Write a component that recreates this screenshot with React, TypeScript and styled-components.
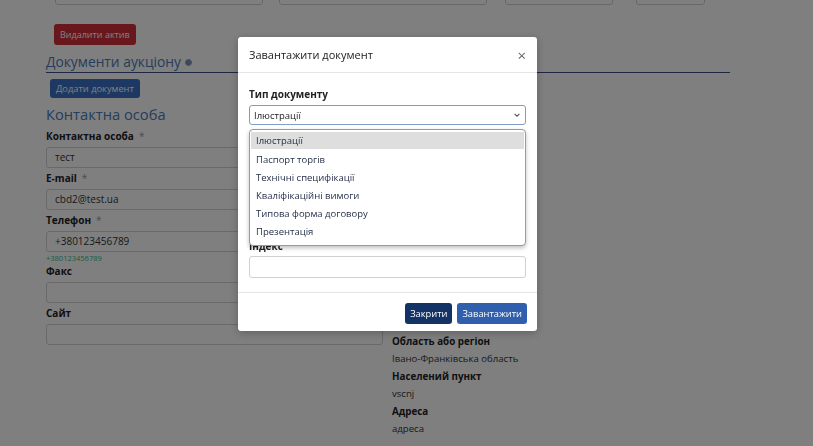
import { createGlobalStyle, styled } from 'styled-components'

const GlobalStyle = createGlobalStyle`
  html, body {
    margin: 0;
    padding: 0;
    background: #fff;
    font-family: 'Open Sans', 'Noto Sans', sans-serif;
    color: #212529;
    overflow: hidden;
  }
  * { box-sizing: border-box; }
`

const Page = styled.div`
  width: 813px;
  height: 446px;
  padding-left: 46px;
  overflow: hidden;
`

const TopRow = styled.div`
  display: flex;
  margin-top: -17px;
  padding-left: 9px;
`

const TopInput = styled.div<{ $w: number; $gap: number }>`
  width: ${({ $w }) => $w}px;
  margin-right: ${({ $gap }) => $gap}px;
  height: 22px;
  border: 1px solid #cfcfcf;
  border-radius: 3px;
`

const Button = styled.button<{ $tone: 'danger' | 'primary' | 'dark' | 'blue' }>`
  border: none;
  border-radius: 3px;
  color: #fff;
  font-family: inherit;
  font-size: 9.5px;
  line-height: 1;
  padding: 0 6px;
  white-space: nowrap;
  cursor: pointer;
  background: ${({ $tone }) =>
    $tone === 'danger' ? '#d0303a' : $tone === 'primary' ? '#3a70c4' : $tone === 'dark' ? '#133366' : '#2f5fad'};
`

const DeleteButton = styled(Button)`
  height: 21px;
  margin: 19px 0 0 8px;
  display: block;
  font-size: 9px;
`

const SectionTitle = styled.h3`
  margin: 7px 0 0;
  display: flex;
  align-items: center;
  gap: 4px;
  font-size: 13.8px;
  font-weight: 400;
  line-height: 20px;
  color: #4c7ab8;
  width: 684px;
  border-bottom: 1.5px solid #3a4f86;
`

const InfoDot = styled.span`
  width: 7px;
  height: 7px;
  border-radius: 50%;
  background: #7d8fae;
  border: 1.5px solid #8aa0c4;
  display: inline-block;
  margin-top: 1px;
`

const AddButton = styled(Button)`
  height: 19px;
  margin: 6px 0 0 4px;
  display: block;
  font-size: 9.3px;
`

const Columns = styled.div`
  display: flex;
  gap: 9px;
`

const LeftColumn = styled.div`
  width: 337px;
`

const RightColumn = styled.div`
  padding-top: 235px;
`

const SubTitle = styled.h4`
  margin: 6px 0 0;
  font-size: 14.7px;
  font-weight: 400;
  line-height: 20px;
  color: #4c7ab8;
`

const Fields = styled.div`
  padding-top: 5px;
`

const Label = styled.div`
  font-size: 10px;
  font-weight: 700;
  line-height: 14px;
  color: #222;
  & span {
    color: #999;
    font-weight: 400;
    margin-left: 5px;
  }
`

const Input = styled.div`
  margin-top: 4px;
  height: 21px;
  border: 1px solid #d3d3d3;
  border-radius: 3px;
  padding: 0 8px;
  font-size: 10px;
  line-height: 19px;
  color: #333;
  margin-bottom: 3px;
`

const Hint = styled.div`
  font-size: 7.5px;
  line-height: 10px;
  color: #33b98c;
  margin: -2px 0 1px;
`

const InfoLabel = styled.div`
  font-size: 9.8px;
  font-weight: 700;
  line-height: 17px;
  color: #222;
`

const InfoValue = styled.div`
  font-size: 9.6px;
  line-height: 17px;
  color: #333;
  margin-bottom: 1px;
`

const Overlay = styled.div`
  position: fixed;
  inset: 0;
  background: rgba(0, 0, 0, 0.5);
  padding: 37px 0 0 238px;
`

const Modal = styled.div`
  width: 299px;
  background: #fff;
  border-radius: 3px;
  box-shadow: 0 2px 8px rgba(0, 0, 0, 0.25);
`

const ModalHeader = styled.div`
  height: 36px;
  display: flex;
  align-items: center;
  justify-content: space-between;
  padding: 0 11px;
  border-bottom: 1px solid #e6e6e6;
`

const ModalTitle = styled.div`
  font-size: 11px;
  color: #222;
`

const Close = styled.span`
  font-size: 15px;
  color: #666;
  line-height: 1;
  margin-top: 2px;
`

const ModalBody = styled.div`
  padding: 14px 11px 14px;
`

const TypeField = styled.div`
  margin-bottom: 114px;
`

const SelectWrap = styled.div`
  position: relative;
  margin-top: 4px;
`

const SelectBox = styled.div`
  height: 20px;
  border: 1px solid #7f9cc4;
  border-radius: 3px;
  padding: 0 4px;
  display: flex;
  align-items: center;
  justify-content: space-between;
  font-size: 9.5px;
  color: #222;
`

const Options = styled.ul`
  position: absolute;
  left: 0;
  right: 0;
  top: 24px;
  margin: 0;
  padding: 2px 1px 5px;
  list-style: none;
  background: #fff;
  border: 1px solid #9a9a9a;
  border-radius: 4px;
  box-shadow: 0 2px 4px rgba(0, 0, 0, 0.25);
  z-index: 2;
`

const Option = styled.li<{ $active?: boolean }>`
  height: ${({ $active }) => ($active ? 17 : 18)}px;
  padding-left: 5px;
  display: flex;
  align-items: center;
  font-size: 9.5px;
  color: #1f2a44;
  background: ${({ $active }) => ($active ? '#dedede' : 'transparent')};
  margin-bottom: ${({ $active }) => ($active ? 1 : 0)}px;
`

const ModalInput = styled.div`
  margin-top: 3px;
  height: 22px;
  border: 1px solid #d0d0d0;
  border-radius: 3px;
`

const ModalFooter = styled.div`
  border-top: 1px solid #e6e6e6;
  padding: 10px 10px 7px;
  display: flex;
  justify-content: flex-end;
  gap: 5px;
`

const FooterButton = styled(Button)`
  height: 21px;
  font-size: 9.3px;
  padding: 0 5px;
`

const options = [
  'Ілюстрації',
  'Паспорт торгів',
  'Технічні специфікації',
  'Кваліфікаційні вимоги',
  'Типова форма договору',
  'Презентація',
]

const Chevron = () => (
  <svg width="8" height="8" viewBox="0 0 10 10" fill="none" stroke="#555" strokeWidth="1.3">
    <path d="M2 3.5 L5 6.5 L8 3.5" />
  </svg>
)

export default function App() {
  return (
    <>
      <GlobalStyle />
      <Page>
        <TopRow>
          <TopInput $w={208} $gap={16} />
          <TopInput $w={208} $gap={18} />
          <TopInput $w={108} $gap={23} />
          <TopInput $w={69} $gap={0} />
        </TopRow>
        <DeleteButton $tone="danger">Видалити актив</DeleteButton>
        <SectionTitle>
          Документи аукціону <InfoDot />
        </SectionTitle>
        <AddButton $tone="primary">Додати документ</AddButton>
        <Columns>
          <LeftColumn>
            <SubTitle>Контактна особа</SubTitle>
            <Fields>
              <Label>
                Контактна особа<span>*</span>
              </Label>
              <Input>тест</Input>
              <Label>
                E-mail<span>*</span>
              </Label>
              <Input>cbd2@test.ua</Input>
              <Label>
                Телефон<span>*</span>
              </Label>
              <Input>+380123456789</Input>
              <Hint>+380123456789</Hint>
              <Label>Факс</Label>
              <Input />
              <Label>Сайт</Label>
              <Input />
            </Fields>
          </LeftColumn>
          <RightColumn>
            <InfoLabel>Область або регіон</InfoLabel>
            <InfoValue>Івано-Франківська область</InfoValue>
            <InfoLabel>Населений пункт</InfoLabel>
            <InfoValue>vscnj</InfoValue>
            <InfoLabel>Адреса</InfoLabel>
            <InfoValue>адреса</InfoValue>
          </RightColumn>
        </Columns>
      </Page>
      <Overlay>
        <Modal>
          <ModalHeader>
            <ModalTitle>Завантажити документ</ModalTitle>
            <Close>×</Close>
          </ModalHeader>
          <ModalBody>
            <TypeField>
              <Label>Тип документу</Label>
              <SelectWrap>
                <SelectBox>
                  Ілюстрації
                  <Chevron />
                </SelectBox>
                <Options>
                  {options.map((o, i) => (
                    <Option key={o} $active={i === 0}>
                      {o}
                    </Option>
                  ))}
                </Options>
              </SelectWrap>
            </TypeField>
            <div>
              <Label>Індекс</Label>
              <ModalInput />
            </div>
          </ModalBody>
          <ModalFooter>
            <FooterButton $tone="dark">Закрити</FooterButton>
            <FooterButton $tone="blue">Завантажити</FooterButton>
          </ModalFooter>
        </Modal>
      </Overlay>
    </>
  )
}
